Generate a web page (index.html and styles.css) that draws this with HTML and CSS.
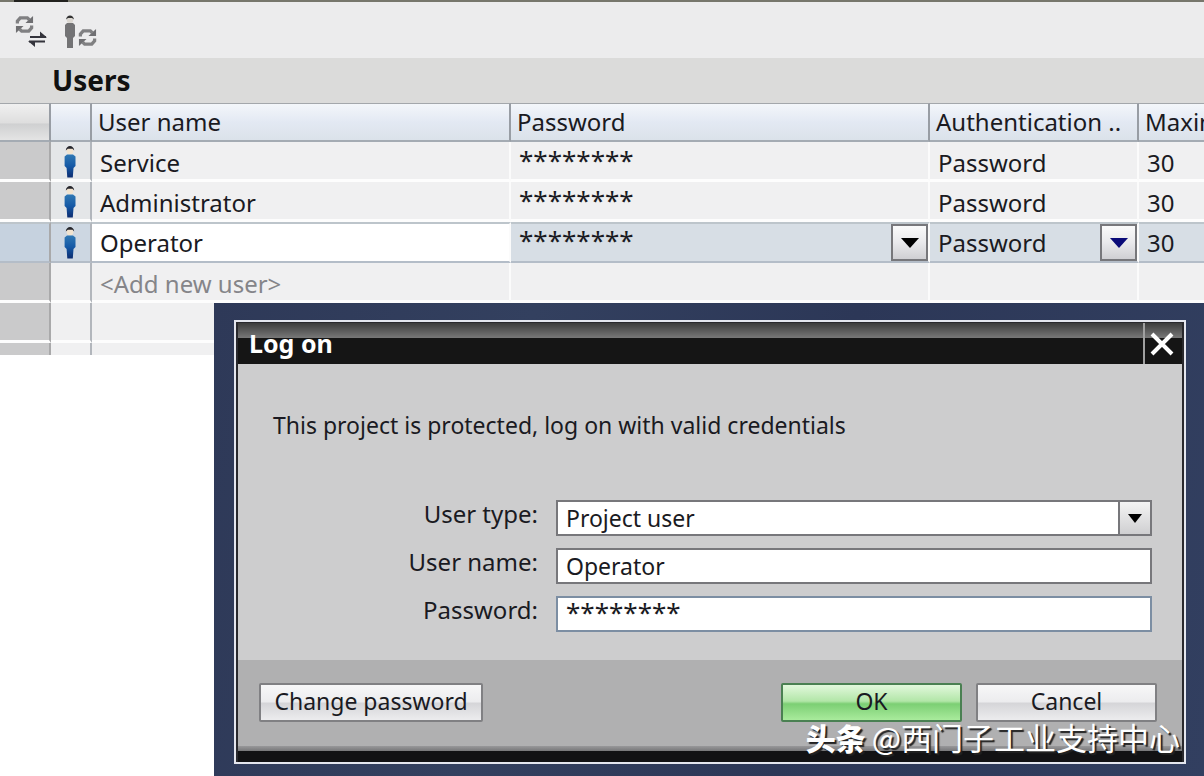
FILE: index.html
```html
<!DOCTYPE html>
<html lang="en">
	<head>
		<meta charset="utf-8" />
		<title>Users</title>
		<link rel="stylesheet" href="styles.css">
	</head>
	<body>
		<!-- shared icons -->
		<svg class="defs" width="0" height="0" aria-hidden="true">
			<linearGradient id="blue" x1="0" y1="0" x2="0" y2="1">
				<stop offset="0" stop-color="#2f78b4"/>
				<stop offset="0.5" stop-color="#1559a6"/>
				<stop offset="1" stop-color="#0c2c70"/>
			</linearGradient>
			<symbol id="person" viewBox="0 0 14 34">
				<circle cx="7" cy="6" r="3.4" fill="#f1e3cf"/>
				<path d="M2.800 5.500C3 2.500 5 1 7 1s4 1.500 4.200 4.500L9.500 3.800H4.800z" fill="#25252b"/>
				<path d="M4 9.500h6l2.500 2v9.500l-2 2-.7 9.500H4.300L3.600 23l-2-2v-9.500z" fill="url(#blue)"/>
			</symbol>
			<symbol id="refresh" viewBox="0 0 20 20">
				<path d="M2.500 9V6.500L5.500 3H13l2 2M17.500 11v2.500L14.500 17H7l-2-2" fill="none" stroke="#808082" stroke-width="3.400"/>
				<path d="M11 8.500h8V1zM9 11.500H1V19z" fill="#6f6f72"/>
			</symbol>
		</svg>

		<div class="toolbar">
			<button class="tool" aria-label="Synchronize">
				<svg width="34" height="34" viewBox="0 0 34 34">
					<use href="#refresh" x="0" y="0" width="21" height="19"/>
					<path d="M16 22h16M15 26.500h16" stroke="#34343c" stroke-width="2"/>
					<path d="M26 16.500l7 6h-7zM21 32l-7-6h7z" fill="#34343c"/>
				</svg>
			</button>
			<button class="tool" aria-label="Update users">
				<svg width="34" height="34" viewBox="0 0 34 34">
					<circle cx="6" cy="5" r="3.200" fill="#dcd8d2"/>
					<path d="M2 4.500C2.500 2 4 .5 6 .5S9.500 2 10 4.500L8 3H4z" fill="#333"/>
					<path d="M3 8h6l2 2v11l-2 2v10H3V23l-2-2V10z" fill="#737375"/>
					<use href="#refresh" x="13" y="13" width="21" height="19"/>
				</svg>
			</button>
		</div>
		<h1 class="caption">Users</h1>

		<table class="users">
			<colgroup>
				<col class="c-mark"><col class="c-icon"><col class="c-name"><col class="c-pass"><col class="c-auth"><col>
			</colgroup>
			<thead>
				<tr>
					<th class="mark"></th>
					<th></th>
					<th>User name</th>
					<th>Password</th>
					<th>Authentication ..</th>
					<th>Maxim</th>
				</tr>
			</thead>
			<tbody>
				<tr>
					<td class="mark"></td>
					<td class="icon"><svg width="14" height="34"><use href="#person"/></svg></td>
					<td>Service</td>
					<td class="stars">********</td>
					<td>Password</td>
					<td>30</td>
				</tr>
				<tr>
					<td class="mark"></td>
					<td class="icon"><svg width="14" height="34"><use href="#person"/></svg></td>
					<td>Administrator</td>
					<td class="stars">********</td>
					<td>Password</td>
					<td>30</td>
				</tr>
				<tr class="selected">
					<td class="mark"></td>
					<td class="icon"><svg width="14" height="34"><use href="#person"/></svg></td>
					<td class="editing">Operator</td>
					<td class="stars">
						<div class="cell">
							<span>********</span>
							<button class="drop" aria-label="Change password"><svg width="18" height="10"><path d="M0 0h18l-9 10z"/></svg></button>
						</div>
					</td>
					<td>
						<div class="cell">
							<select class="cell-select" aria-label="Authentication">
								<option>Password</option>
							</select>
							<span class="drop navy"><svg width="18" height="10"><path d="M0 0h18l-9 10z"/></svg></span>
						</div>
					</td>
					<td>30</td>
				</tr>
				<tr class="new">
					<td class="mark"></td>
					<td></td>
					<td>&lt;Add new user&gt;</td>
					<td></td>
					<td></td>
					<td></td>
				</tr>
				<tr class="empty">
					<td class="mark"></td>
					<td></td>
					<td></td>
					<td></td>
					<td></td>
					<td></td>
				</tr>
				<tr class="empty last">
					<td class="mark"></td>
					<td></td>
					<td></td>
					<td></td>
					<td></td>
					<td></td>
				</tr>
			</tbody>
		</table>

		<div class="backdrop">
			<form class="dialog">
				<div class="title">
					<h2>Log on</h2>
					<button type="button" class="close" aria-label="Close">
						<svg width="24" height="24" viewBox="0 0 24 24"><path d="M2 2l20 20M22 2L2 22"/></svg>
					</button>
				</div>
				<div class="content">
					<p>This project is protected, log on with valid credentials</p>
					<div class="fields">
						<label for="type">User type:</label>
						<div class="combo">
							<select id="type">
								<option>Project user</option>
							</select>
							<span class="arrow"><svg width="14" height="9"><path d="M0 0h14l-7 9z"/></svg></span>
						</div>
						<label for="name">User name:</label>
						<input id="name" type="text" value="Operator">
						<label for="pass">Password:</label>
						<input id="pass" class="secret" type="text" value="********">
					</div>
				</div>
				<div class="buttons">
					<button type="button" class="btn change">Change password</button>
					<button type="button" class="btn ok">OK</button>
					<button type="button" class="btn">Cancel</button>
				</div>
				<div class="base"></div>
			</form>
		</div>

		<div class="watermark"><b>头条</b><span>@西门子工业支持中心</span></div>
	</body>
</html>
```
FILE: styles.css
```css
*{
	padding: 0;
	margin: 0;
	box-sizing: border-box;
}
body{
	position: relative;
	min-height: 100vh;
	overflow: hidden;
	background: #fff;
	color: #1a1a22;
	font: 24px/36px "Noto Sans", "Open Sans", sans-serif;
}
button, input, select{
	font: inherit;
	color: inherit;
}
.defs{
	position: absolute;
}

/*toolbar*/
.toolbar{
	display: flex;
	gap: 16px;
	height: 58px;
	padding: 15px 14px 0;
	background:
		linear-gradient(#22221f, #22221f) 14px 0 / 54px 2px no-repeat,
		linear-gradient(#77776c, #77776c) 0 0 / 100% 2px no-repeat,
		#ececed;
}
.tool{
	width: 34px;
	height: 34px;
	border: 0;
	background: none;
}
.tool svg{
	display: block;
}
.caption{
	height: 45px;
	padding-left: 52px;
	background: #dbdbda;
	color: #111;
	font-size: 28px;
	line-height: 44px;
}

/*users table*/
.users{
	width: 100%;
	table-layout: fixed;
	border-collapse: separate;
	border-spacing: 0;
}
.c-mark{
	width: 51px;
}
.c-icon{
	width: 41px;
}
.c-name, .c-pass{
	width: 419px;
}
.c-auth{
	width: 209px;
}
.users th{
	height: 39px;
	padding-left: 6px;
	border-top: 1px solid #a3a7ab;
	border-bottom: 2px solid #a4abb3;
	border-right: 2px solid #989da4;
	background: linear-gradient(#f3f6fa, #e3e9f3 50%, #dbe2ea);
	font-weight: normal;
	line-height: 36px;
	text-align: left;
	white-space: nowrap;
	overflow: hidden;
}
.users th.mark{
	background: linear-gradient(#f0f0f0, #dedede 52%, #cfd0d1 56%, #e4e4e4);
}
.users td{
	height: 40px;
	padding: 5px 0 0 8px;
	border-bottom: 3px solid #fdfdfd;
	border-right: 2px solid #fbfbfb;
	background: #f0f0f1;
	line-height: 32px;
	white-space: nowrap;
}
.users th:last-child, .users td:last-child{
	border-right: 0;
}
.users td.mark{
	border-right: 2px solid #a9a9aa;
	background: #cacacb;
}
.users td:nth-child(2){
	border-right: 2px solid #b2b6bc;
}
.users td.icon{
	padding: 3px 2px 0 0;
	background: #e4e6e8;
	line-height: 0;
	text-align: center;
}
.users td.stars{
	padding-top: 0;
	font-size: 26px;
	line-height: 37px;
}
.users .selected td{
	height: 41px;
	padding-top: 0;
	border-top: 2px solid #bdc5cb;
	border-bottom: 2px solid #b4bdc8;
	background: #d7dee5;
	line-height: 37px;
}
.users .selected td.mark{
	background: #c6d2df;
}
.users .selected td.icon{
	background: #cdd7e2;
	line-height: 0;
}
.users .selected td.editing{
	background: #fff;
}
.users .new td{
	color: #858589;
}
.users .last td{
	height: 12px;
	border-bottom: 0;
}
.cell{
	position: relative;
	display: flex;
	justify-content: space-between;
	height: 37px;
}
.stars .cell{
	line-height: 32px;
}
.cell-select{
	width: 100%;
	border: 0;
	background: none;
	appearance: none;
}
.drop{
	display: flex;
	flex: none;
	justify-content: center;
	align-items: center;
	width: 37px;
	height: 37px;
	border: 2px solid #77777b;
	background: linear-gradient(#fafafa, #e9e9ec 50%, #cfcfd3);
	pointer-events: none;
}
.drop.navy{
	position: absolute;
	right: 0;
	top: 0;
	fill: #0a0a78;
}

/*log on dialog*/
.backdrop{
	position: absolute;
	left: 214px;
	top: 303px;
	right: 0;
	bottom: 0;
	padding: 17px 18px 12px 20px;
	background: linear-gradient(100deg, #2e3958, #33405f 30%, #2c3757 60%, #323f60);
}
.dialog{
	display: flex;
	flex-direction: column;
	height: 100%;
	padding: 1px 2px 0;
	border: 2px solid #e4e6ee;
	background: #cdcdce;
	box-shadow: inset 0 0 0 2px #29292d;
	font-size: 23px;
}
.title{
	display: flex;
	height: 41px;
	background: linear-gradient(#3c3c3c, #777 36%, #151515 37%);
	color: #fff;
}
.title h2{
	flex: 1;
	padding-left: 11px;
	font-size: 25px;
	line-height: 40px;
}
.close{
	display: flex;
	justify-content: center;
	align-items: center;
	width: 39px;
	padding-right: 3px;
	border: 0;
	border-left: 2px solid #a0a0a0;
	background: none;
}
.close path{
	fill: none;
	stroke: #fff;
	stroke-width: 4;
}
.content{
	flex: 1;
	padding: 43px 30px 0 35px;
}
.fields{
	display: grid;
	grid-template-columns: 265px 1fr;
	column-gap: 18px;
	row-gap: 12px;
	margin-top: 57px;
}
.fields label{
	font-size: 24px;
	line-height: 28px;
	text-align: right;
}
.fields input, .fields select{
	width: 100%;
	height: 36px;
	padding: 0 8px;
	border: 2px solid #77777b;
	border-radius: 0;
	background: #fff;
	line-height: 32px;
	appearance: none;
	outline: 0;
}
.fields .secret{
	padding-bottom: 4px;
	border-color: #7c8ea3;
	font-size: 26px;
}
.combo{
	position: relative;
}
.combo select{
	display: block;
}
.arrow{
	position: absolute;
	right: 0;
	top: 0;
	display: flex;
	justify-content: center;
	align-items: center;
	width: 34px;
	height: 36px;
	border: 2px solid #77777b;
	background: linear-gradient(#f4f4f4, #cfcfd1);
	pointer-events: none;
}
.buttons{
	display: flex;
	gap: 14px;
	height: 86px;
	padding: 23px 25px 0 21px;
	background: #b0b0b1;
}
.btn{
	width: 181px;
	height: 39px;
	padding-bottom: 3px;
	border: 2px solid #808083;
	border-radius: 2px;
	background: linear-gradient(#f7f7f8, #ececee 48%, #d5d5d8 52%, #ececee);
	line-height: 32px;
}
.btn.change{
	width: 224px;
	margin-right: auto;
}
.btn.ok{
	border-color: #4a8052;
	background: linear-gradient(#e2f8dc, #b2e6a8 46%, #7ccf74 54%, #a9eb9c);
}
.base{
	height: 16px;
	background: linear-gradient(#98989a, #777779 5px, #121214 5px);
}

/*watermark*/
.watermark{
	position: absolute;
	right: 24px;
	bottom: 22px;
	display: flex;
	gap: 6px;
	color: #fff;
	font: 31px/34px "Noto Sans CJK SC", sans-serif;
	text-shadow: 2px 2px 1px #222;
	pointer-events: none;
}
.watermark b{
	font-size: 30px;
	font-weight: 900;
}
```
